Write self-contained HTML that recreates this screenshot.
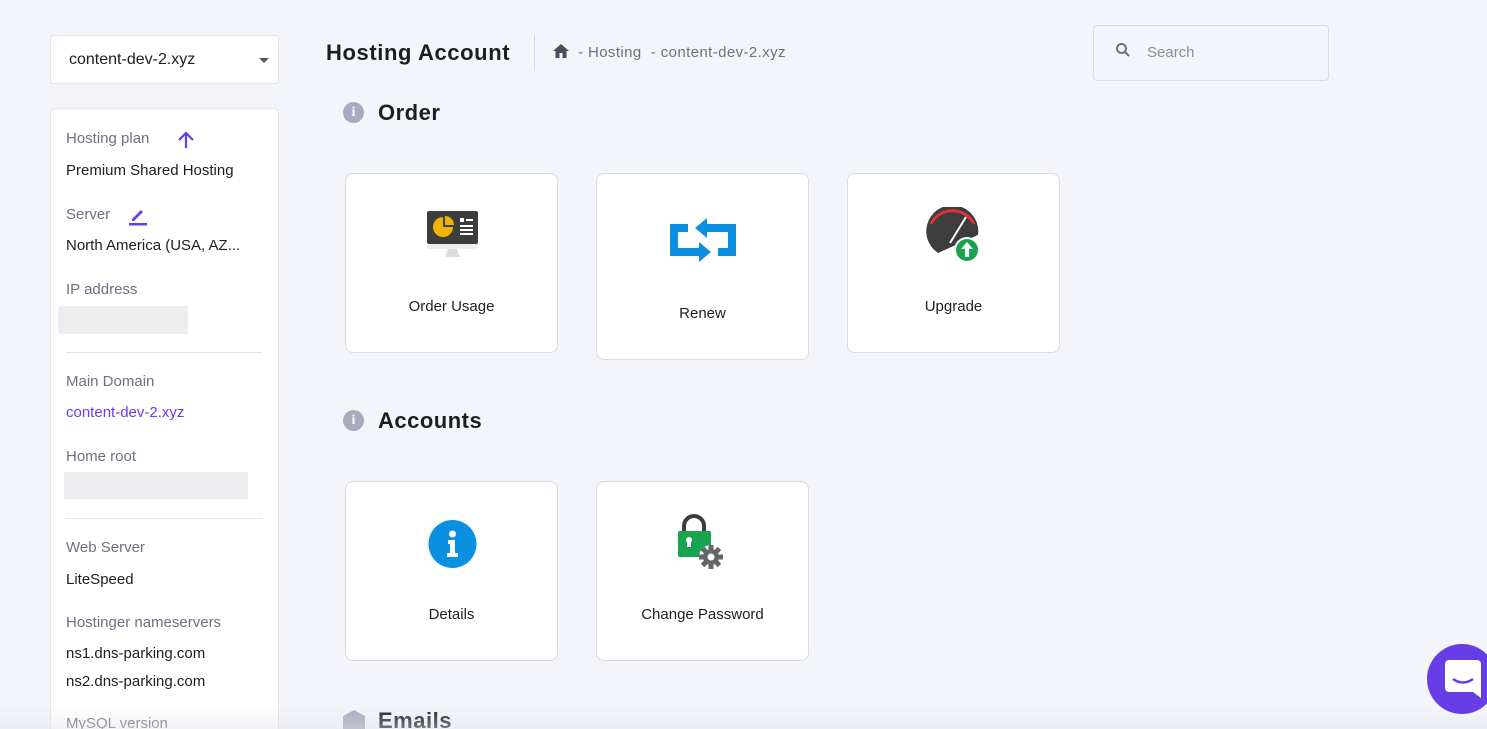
<!DOCTYPE html>
<html><head><style>
*{box-sizing:border-box;margin:0;padding:0}
html,body{width:1487px;height:729px;overflow:hidden}
body{background:#f4f5fb;font-family:"Liberation Sans",sans-serif;color:#2f1c6a;position:relative}
.abs{position:absolute}
.dd{left:50px;top:35px;width:229px;height:49px;background:#fff;border:1px solid #e3e4ea;border-radius:4px;font-size:16px;color:#1d1e20;padding:15px 18px}
.dd:after{content:"";position:absolute;right:9px;top:22px;border:5px solid transparent;border-top:5px solid #555;}
.panel{left:50px;top:108px;width:229px;height:640px;background:#fff;border:1px solid #e3e4ea;border-radius:6px}
.lbl{font-size:15px;color:#6d7081;left:66px}
.val{font-size:15px;color:#1d1e20;left:66px}
.hr{left:66px;width:196px;height:1px;background:#e3e4ea}
.blur{background:#ececee}
.card{background:#fff;border:1px solid #dadce3;border-radius:8px;width:213px}
.card .t{position:absolute;width:100%;text-align:center;font-size:15px;color:#1d1e20}
h2{position:absolute;font-size:22px;color:#1d1e20;font-weight:bold}
.ii{position:absolute;width:21px;height:21px;border-radius:50%;background:#a8abbd;color:#fff;font-size:14px;font-weight:bold;text-align:center;line-height:21px;font-family:"Liberation Serif",serif}
</style></head><body>
<div class="abs dd">content-dev-2.xyz</div>
<div class="abs panel"></div>
<div class="abs lbl" style="top:130px">Hosting plan</div>
<svg class="abs" style="left:176px;top:130px" width="20" height="20" viewBox="0 0 20 20"><path d="M10 18V3M3 10l7-7 7 7" stroke="#673de6" stroke-width="2.2" fill="none"/></svg>
<div class="abs val" style="top:162px">Premium Shared Hosting</div>
<div class="abs lbl" style="top:206px">Server</div>
<svg class="abs" style="left:128px;top:204px" width="20" height="22" viewBox="0 0 20 22"><path d="M4 15l9-9 2 2-9 9H4z" fill="#673de6"/><rect x="1" y="19" width="18" height="2.5" fill="#673de6"/></svg>
<div class="abs val" style="top:237px">North America (USA, AZ...</div>
<div class="abs lbl" style="top:281px">IP address</div>
<div class="abs blur" style="left:58px;top:306px;width:130px;height:28px"></div>
<div class="abs hr" style="top:352px"></div>
<div class="abs lbl" style="top:373px">Main Domain</div>
<div class="abs val" style="top:404px;color:#673de6">content-dev-2.xyz</div>
<div class="abs lbl" style="top:448px">Home root</div>
<div class="abs blur" style="left:64px;top:472px;width:184px;height:27px"></div>
<div class="abs hr" style="top:518px"></div>
<div class="abs lbl" style="top:539px">Web Server</div>
<div class="abs val" style="top:571px">LiteSpeed</div>
<div class="abs lbl" style="top:614px">Hostinger nameservers</div>
<div class="abs val" style="top:645px">ns1.dns-parking.com</div>
<div class="abs val" style="top:673px">ns2.dns-parking.com</div>
<div class="abs lbl" style="top:715px">MySQL version</div>

<div class="abs" style="left:326px;top:40px;font-size:22px;font-weight:bold;color:#1d1e20;letter-spacing:0.6px">Hosting Account</div>
<div class="abs" style="left:534px;top:35px;width:1px;height:36px;background:#d8d9e0"></div>
<svg class="abs" style="left:552px;top:43px" width="18" height="16" viewBox="0 0 18 16"><path d="M9 1L1 8h2.5v7h4v-5h3v5h4V8H17z" fill="#4b4d5c"/></svg>
<div class="abs" style="left:578px;top:44px;font-size:15px;color:#6d7081;letter-spacing:0.4px">- Hosting &nbsp;- content-dev-2.xyz</div>
<div class="abs" style="left:1093px;top:25px;width:236px;height:56px;border:1px solid #dadce3;border-radius:4px;background:#f4f5fb"></div>
<svg class="abs" style="left:1115px;top:42px" width="16" height="16" viewBox="0 0 16 16"><circle cx="6.5" cy="6.5" r="4.5" stroke="#6d7081" stroke-width="2" fill="none"/><path d="M10 10l4 4" stroke="#6d7081" stroke-width="2"/></svg>
<div class="abs" style="left:1147px;top:44px;font-size:15px;color:#8a8c9a">Search</div>

<div class="ii" style="left:343px;top:102px">i</div>
<h2 style="left:378px;top:100px;letter-spacing:0.5px">Order</h2>
<div class="abs card" style="left:345px;top:173px;height:180px"><div class="t" style="top:124px">Order Usage</div>
<svg class="abs" style="left:80px;top:36px" width="54" height="52" viewBox="0 0 54 52"><rect x="1" y="1" width="51" height="33" rx="2" fill="#3d3d3d"/><rect x="1" y="34" width="51" height="5" fill="#eee"/><path d="M22 39h9l3 8H19z" fill="#ddd"/><circle cx="17" cy="17" r="10" fill="#f0b400"/><path d="M17 7v10h10A10 10 0 0 0 17 7" fill="#3d3d3d"/><path d="M19 6v9h9A9 9 0 0 0 19 6" fill="#f0b400"/><rect x="34" y="8" width="4" height="4" fill="#fff"/><rect x="40" y="9" width="7" height="2" fill="#fff"/><rect x="34" y="15" width="13" height="2" fill="#fff"/><rect x="34" y="19" width="13" height="2" fill="#fff"/><rect x="34" y="23" width="13" height="2" fill="#fff"/></svg></div>
<div class="abs card" style="left:596px;top:173px;height:187px"><div class="t" style="top:131px">Renew</div>
<svg class="abs" style="left:73px;top:40px" width="66" height="50" viewBox="0 0 66 50"><g fill="#0b8fe0"><rect x="0" y="10" width="8" height="32"/><rect x="0" y="10" width="18" height="8"/><rect x="0" y="34" width="30" height="8"/><path d="M29 28l12 10-12 10z"/><rect x="58" y="10" width="8" height="32"/><rect x="48" y="34" width="18" height="8"/><rect x="36" y="10" width="30" height="8"/><path d="M37 4L25 14l12 10z"/></g></svg></div>
<div class="abs card" style="left:847px;top:173px;height:180px"><div class="t" style="top:124px">Upgrade</div>
<svg class="abs" style="left:76px;top:33px" width="58" height="58" viewBox="0 0 58 58"><path d="M14 46A26 26 0 1 1 54 28" fill="#3d3d3d"/><path d="M7 17A24 24 0 0 1 50 17" stroke="#d33" stroke-width="3" fill="none"/><path d="M26 36l16-26" stroke="#fff" stroke-width="2"/><circle cx="43" cy="43" r="13" fill="#fff"/><circle cx="43" cy="43" r="11" fill="#18a34f"/><path d="M43 35l-6 7h4v8h4v-8h4z" fill="#fff"/></svg></div>

<div class="ii" style="left:343px;top:410px">i</div>
<h2 style="left:378px;top:408px;letter-spacing:0.5px">Accounts</h2>
<div class="abs card" style="left:345px;top:481px;height:180px"><div class="t" style="top:124px">Details</div>
<svg class="abs" style="left:82px;top:38px" width="50" height="50" viewBox="0 0 50 50"><circle cx="24.5" cy="24" r="24" fill="#0b8fe0"/><circle cx="24.5" cy="14" r="3.5" fill="#fff"/><path d="M20 20h7v13h3v4H19v-4h3v-9h-2z" fill="#fff"/></svg></div>
<div class="abs card" style="left:596px;top:481px;height:180px"><div class="t" style="top:124px">Change Password</div>
<svg class="abs" style="left:78px;top:32px" width="52" height="58" viewBox="0 0 52 58"><path d="M9 17V12a10 10 0 0 1 20 0v5" stroke="#3d3d3d" stroke-width="4" fill="none"/><rect x="3" y="17" width="33" height="26" rx="2" fill="#18a34f"/><circle cx="14" cy="26" r="3" fill="#fff"/><path d="M12 27h4v6h-4z" fill="#fff"/><circle cx="36" cy="43" r="12" fill="#fff"/><g fill="#666"><circle cx="36" cy="43" r="8"/><rect x="33.5" y="31" width="5" height="24"/><rect x="24" y="40.5" width="24" height="5"/><rect x="33.5" y="31" width="5" height="24" transform="rotate(45 36 43)"/><rect x="33.5" y="31" width="5" height="24" transform="rotate(-45 36 43)"/></g><circle cx="36" cy="43" r="3.5" fill="#fff"/></svg></div>

<svg class="abs" style="left:342px;top:710px" width="24" height="24" viewBox="0 0 24 24"><path d="M12 0l11 6v14H1V6z" fill="#a8abbd"/></svg>
<h2 style="left:378px;top:708px;letter-spacing:0.5px">Emails</h2>
<div class="abs" style="left:0;top:706px;width:1487px;height:23px;background:linear-gradient(rgba(230,231,238,0),rgba(225,226,233,0.45))"></div>
<div class="abs" style="left:1427px;top:644px;width:70px;height:70px;border-radius:50%;background:#673de6"></div>
<svg class="abs" style="left:1445px;top:660px" width="36" height="38" viewBox="0 0 36 38"><path d="M4 0h28a4 4 0 0 1 4 4v34l-8-6H4a4 4 0 0 1-4-4V4a4 4 0 0 1 4-4z" fill="#fff"/><path d="M8 19q10 7 20 0" stroke="#673de6" stroke-width="2.5" fill="none"/></svg>
</body></html>
